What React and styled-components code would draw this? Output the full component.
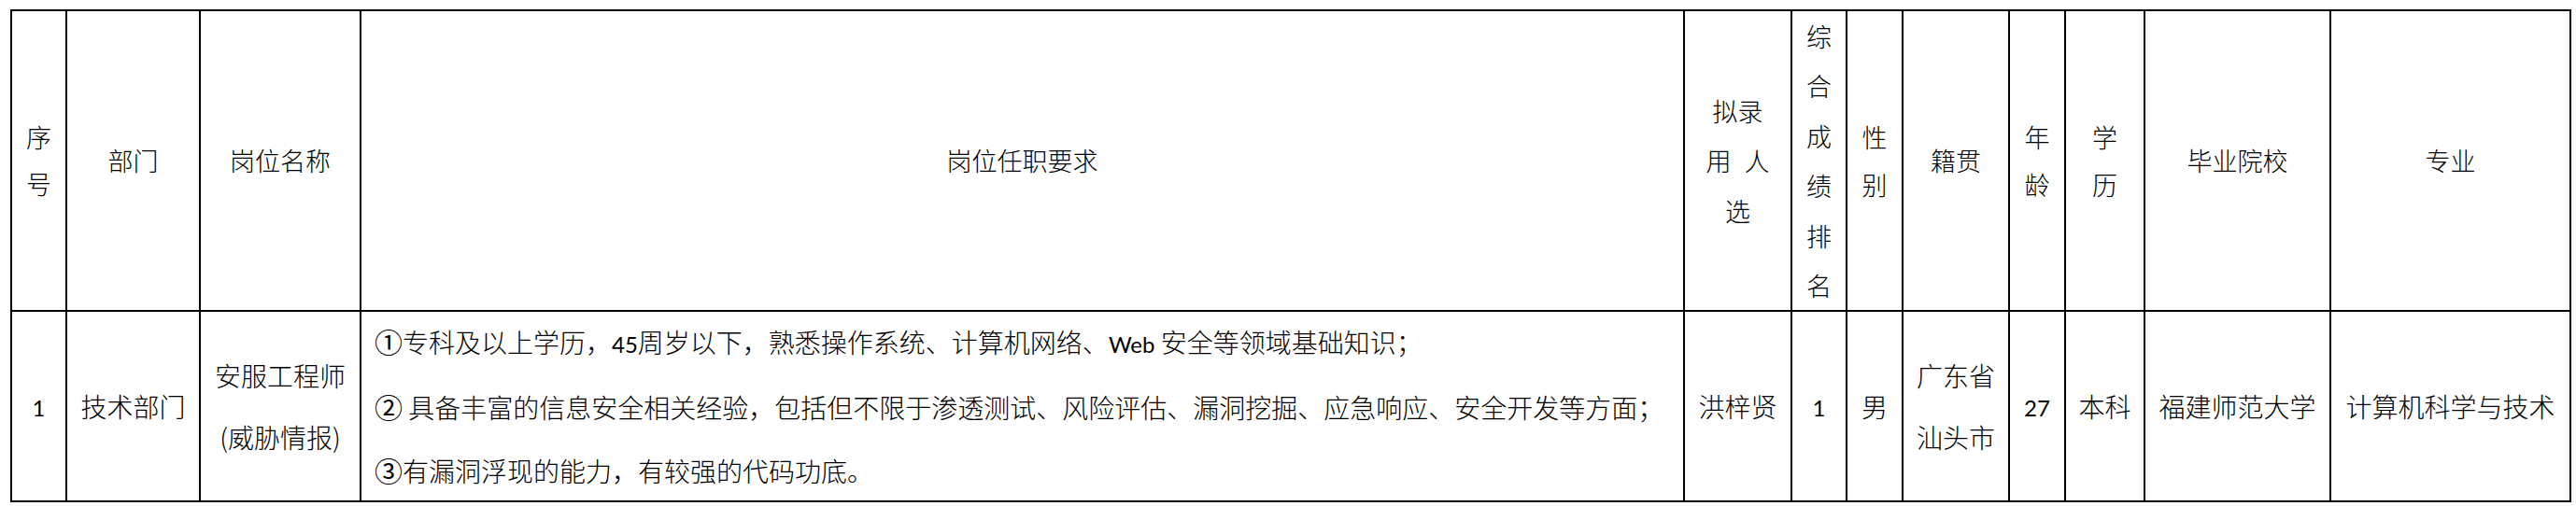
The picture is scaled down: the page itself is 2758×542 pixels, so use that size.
import React from 'react';
import styled, { createGlobalStyle } from 'styled-components';

const Global = createGlobalStyle`
  html, body { margin: 0; padding: 0; background: #ffffff; }
  body {
    font-family: "Noto Sans CJK SC", "Noto Sans", sans-serif;
    color: #000000;
  }
`;

const COLS = [59, 143, 172, 1417, 115, 59, 60, 114, 60, 85, 199, 257];

const Sheet = styled.div`
  display: grid;
  grid-template-columns: ${COLS.map((c) => `${c}px`).join(' ')};
  grid-template-rows: 322px 204px;
  width: max-content;
  margin: 10px 0 0 11px;
  border-top: 2px solid #000;
  border-left: 2px solid #000;
`;

const Cell = styled.div`
  box-sizing: border-box;
  border-right: 2px solid #000;
  border-bottom: 2px solid #000;
  display: flex;
  flex-direction: column;
  align-items: center;
  justify-content: center;
  text-align: center;
  white-space: nowrap;
  font-weight: 300;
`;

const HeadCell = styled(Cell)`
  font-size: 27px;
  line-height: ${(p) => p.$lh || 52}px;
`;

const BodyCell = styled(Cell)`
  font-size: 28px;
  line-height: 66px;
`;

const DescCell = styled(BodyCell)`
  align-items: flex-start;
  text-align: left;
  padding-left: 14px;
  line-height: 67px;
`;

const Line = styled.span`
  display: block;
`;

const Latin = styled.span`
  font-family: Lato, "Liberation Sans", sans-serif;
  font-size: 24px;
  font-weight: 400;
`;

const Circled = styled.span`
  font-family: "Noto Sans CJK SC", sans-serif;
  font-size: 30px;
  font-weight: 400;
`;

const Gap = styled.span`
  display: inline-block;
  width: ${(p) => p.$w}px;
`;

const headers = [
  { lines: ['序', '号'], lh: 50 },
  { lines: ['部门'] },
  { lines: ['岗位名称'] },
  { lines: ['岗位任职要求'] },
  { lines: ['拟录', <>用<Gap $w={14} />人</>, '选'], lh: 53.5 },
  { lines: ['综', '合', '成', '绩', '排', '名'], lh: 53.5 },
  { lines: ['性', '别'], lh: 51 },
  { lines: ['籍贯'] },
  { lines: ['年', '龄'], lh: 51 },
  { lines: ['学', '历'], lh: 51 },
  { lines: ['毕业院校'] },
  { lines: ['专业'] },
];

const descLines = [
  <><Circled>①</Circled>专科及以上学历，<Latin>45</Latin>周岁以下，熟悉操作系统、计算机网络、<Latin>Web </Latin>安全等领域基础知识；</>,
  <><Circled>②</Circled> 具备丰富的信息安全相关经验，包括但不限于渗透测试、风险评估、漏洞挖掘、应急响应、安全开发等方面；</>,
  <><Circled>③</Circled>有漏洞浮现的能力，有较强的代码功底。</>,
];

const bodyBefore = [
  [<Latin>1</Latin>],
  ['技术部门'],
  ['安服工程师', '(威胁情报)'],
];

const bodyAfter = [
  ['洪梓贤'],
  [<Latin>1</Latin>],
  ['男'],
  ['广东省', '汕头市'],
  [<Latin>27</Latin>],
  ['本科'],
  ['福建师范大学'],
  ['计算机科学与技术'],
];

const renderLines = (lines) =>
  lines.map((l, i) => <Line key={i}>{l}</Line>);

export default function App() {
  return (
    <>
      <Global />
      <Sheet>
        {headers.map((h, i) => (
          <HeadCell key={`h${i}`} $lh={h.lh}>
            {renderLines(h.lines)}
          </HeadCell>
        ))}
        {bodyBefore.map((b, i) => (
          <BodyCell key={`b${i}`}>{renderLines(b)}</BodyCell>
        ))}
        <DescCell>{renderLines(descLines)}</DescCell>
        {bodyAfter.map((b, i) => (
          <BodyCell key={`a${i}`}>{renderLines(b)}</BodyCell>
        ))}
      </Sheet>
    </>
  );
}
